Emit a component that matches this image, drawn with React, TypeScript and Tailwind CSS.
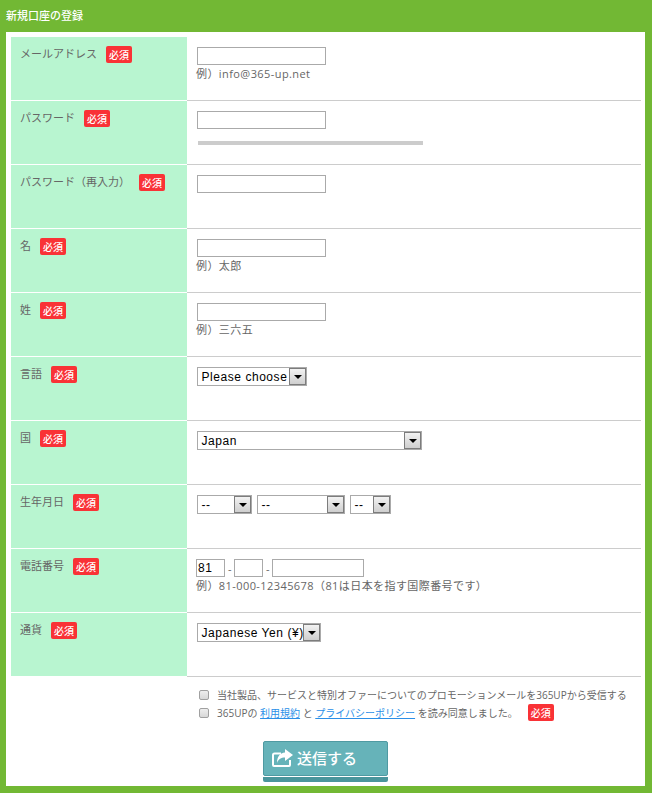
import React from 'react';

const fontBase = 'font-["Open_Sans","Noto_Sans_CJK_JP",sans-serif]';

const Required = ({ className = '' }: { className?: string }) => (
  <span className={`inline-flex h-[17px] w-[26px] shrink-0 items-center justify-center rounded-[2px] bg-[#f93236] text-[10px] font-medium leading-none text-white ${className}`}>
    必須
  </span>
);

const TextBox = ({ width, value = '' }: { width: string; value?: string }) => (
  <input
    readOnly
    value={value}
    className={`block h-[18px] ${width} border border-[#aaaaaa] bg-white px-[1px] font-["Liberation_Sans",sans-serif] text-[12px] leading-none tracking-[0.6px] text-black outline-none`}
  />
);

const SelectBox = ({ width, label }: { width: string; label: string }) => (
  <div className={`flex h-[19px] ${width} items-center justify-between border border-[#aaaaaa] bg-white font-["Liberation_Sans",sans-serif] text-[12px] tracking-[0.55px] text-black`}>
    <span className="overflow-hidden whitespace-nowrap pl-[3.5px] leading-[14px]">{label}</span>
    <span className="flex h-[17px] w-[17px] shrink-0 items-center justify-center border border-[#7c7c7c] bg-gradient-to-b from-[#f2f2f2] to-[#cfcfcf]">
      <span className="h-0 w-0 border-x-[4px] border-t-[4px] border-x-transparent border-t-black" />
    </span>
  </div>
);

const Hint = ({ children }: { children: React.ReactNode }) => (
  <p className="ml-[-1px] mt-[1px] text-[11px] leading-[16px] tracking-[0.42px] text-[#666666]">{children}</p>
);

const Row = ({ label, children }: { label: string; children: React.ReactNode }) => (
  <div className="grid h-[64px] grid-cols-[176px_1fr]">
    <div className="flex items-start gap-[9px] border-b border-white bg-[#b8f5d0] pl-[9px] pt-[9px]">
      <span className="text-[11px] leading-[16px] text-[#666666]">{label}</span>
      <Required />
    </div>
    <div className="border-b border-[#cccccc] pl-[10px] pt-[10px]">{children}</div>
  </div>
);

const SendIcon = () => (
  <svg viewBox="0 0 21 18" className="mr-[4px] mt-[1px] h-[18px] w-[21px] shrink-0" aria-hidden="true">
    <path d="M9 4.5H2.5A1.5 1.5 0 0 0 1 6v10a1 1 0 0 0 1 1h15a1 1 0 0 0 1-1v-5" fill="none" stroke="white" strokeWidth="2" />
    <path d="M13 0L21 6L13 12V8.5C9 8.5 6.5 10 5 14C5 8 8 3.8 13 3.5Z" fill="white" />
  </svg>
);

export default function App() {
  return (
    <div className={`h-[793px] w-[652px] bg-[#72b834] ${fontBase}`}>
      <div className="flex h-[32px] items-center pl-[6px] text-[11px] font-medium text-white">新規口座の登録</div>
      <div className="ml-[6px] mr-[7px] h-[754px] bg-white pl-[5px] pr-[4px] pt-[5px]">
        <Row label="メールアドレス">
          <TextBox width="w-[129px]" />
          <Hint>例）info@365-up.net</Hint>
        </Row>
        <Row label="パスワード">
          <TextBox width="w-[129px]" />
          <div className="ml-[1px] mt-[12px] h-[4px] w-[225px] bg-[#cccccc]" />
        </Row>
        <Row label="パスワード（再入力）">
          <TextBox width="w-[129px]" />
        </Row>
        <Row label="名">
          <TextBox width="w-[129px]" />
          <Hint>例）太郎</Hint>
        </Row>
        <Row label="姓">
          <TextBox width="w-[129px]" />
          <Hint>例）三六五</Hint>
        </Row>
        <Row label="言語">
          <SelectBox width="w-[110px]" label="Please choose" />
        </Row>
        <Row label="国">
          <SelectBox width="w-[225px]" label="Japan" />
        </Row>
        <Row label="生年月日">
          <div className="flex gap-[5px]">
            <SelectBox width="w-[55px]" label="--" />
            <SelectBox width="w-[88px]" label="--" />
            <SelectBox width="w-[41px]" label="--" />
          </div>
        </Row>
        <Row label="電話番号">
          <div className="ml-[-1px] flex items-center gap-[3px] text-[11px] leading-none text-[#666666]">
            <TextBox width="w-[29px]" value="81" />
            <span className="w-[3px]">-</span>
            <TextBox width="w-[29px]" />
            <span className="w-[3px]">-</span>
            <TextBox width="w-[92px]" />
          </div>
          <Hint>例）81-000-12345678（81は日本を指す国際番号です）</Hint>
        </Row>
        <Row label="通貨">
          <SelectBox width="w-[124px]" label="Japanese Yen (¥)" />
        </Row>

        <div className="pl-[188px] pt-[10px] text-[10px] leading-[16px] text-[#666666]">
          <div className="flex items-center gap-[8px]">
            <span className="h-[10px] w-[10px] rounded-[2px] border border-[#a0a0a0] bg-gradient-to-b from-[#eeeeee] to-[#d8d8d8]" />
            <span className="whitespace-nowrap">当社製品、サービスと特別オファーについてのプロモーションメールを365UPから受信する</span>
          </div>
          <div className="mt-[1px] flex items-center gap-[8px]">
            <span className="h-[10px] w-[10px] rounded-[2px] border border-[#a0a0a0] bg-gradient-to-b from-[#eeeeee] to-[#d8d8d8]" />
            <span className="whitespace-nowrap">
              365UPの <a className="text-[#2a8fe8] underline">利用規約</a> と <a className="text-[#2a8fe8] underline">プライバシーポリシー</a> を読み同意しました。
            </span>
            <Required className="ml-[2px]" />
          </div>
        </div>

        <div className="pl-[252px] pt-[20px]">
          <button className="flex h-[35px] w-[125px] items-start rounded-[2px] border border-[#4f9aa2] bg-[#66b3b9] pl-[8px] pt-[6px] text-[15px] font-medium leading-[20px] text-white">
            <SendIcon />
            送信する
          </button>
          <div className="mt-[1px] h-[5px] w-[125px] rounded-b-[2px] bg-[#4a959c]" />
        </div>
      </div>
    </div>
  );
}
